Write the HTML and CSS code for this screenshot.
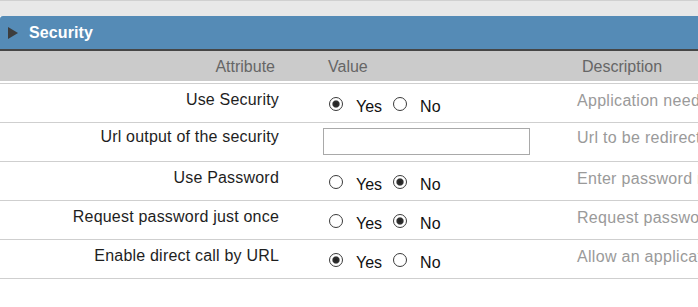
FILE: index.html
```html
<!DOCTYPE html>
<html>
<head>
<meta charset="utf-8">
<title>Security</title>
<link rel="stylesheet" href="styles.css">
</head>
<body>
<div class="topbar"></div>
<div class="section">
  <div class="section-head"><span class="tri"></span><span class="title">Security</span></div>
  <div class="colhead">
    <div class="c-attr">Attribute</div><div class="c-val">Value</div><div class="c-desc">Description</div>
  </div>
  <div class="rows">
    <div class="row">
      <div class="attr">Use Security</div>
      <div class="val"><label class="opt"><input type="radio" name="r1" checked>Yes</label><label class="opt"><input type="radio" name="r1">No</label></div>
      <div class="desc">Application needs security to be accessed</div>
    </div>
    <div class="row row-input">
      <div class="attr">Url output of the security</div>
      <div class="val"><input class="text" type="text"></div>
      <div class="desc">Url to be redirected when access is denied</div>
    </div>
    <div class="row">
      <div class="attr">Use Password</div>
      <div class="val"><label class="opt"><input type="radio" name="r3">Yes</label><label class="opt"><input type="radio" name="r3" checked>No</label></div>
      <div class="desc">Enter password required by the application</div>
    </div>
    <div class="row">
      <div class="attr">Request password just once</div>
      <div class="val"><label class="opt"><input type="radio" name="r4">Yes</label><label class="opt"><input type="radio" name="r4" checked>No</label></div>
      <div class="desc">Request password just once per session</div>
    </div>
    <div class="row last">
      <div class="attr">Enable direct call by URL</div>
      <div class="val"><label class="opt"><input type="radio" name="r5" checked>Yes</label><label class="opt"><input type="radio" name="r5">No</label></div>
      <div class="desc">Allow an application to be called directly by URL</div>
    </div>
  </div>
</div>
</body>
</html>
```
FILE: styles.css
```css
html, body {
  margin: 0;
  padding: 0;
  overflow: hidden;
  background: #fff;
}
body {
  font-family: "Liberation Sans", Arial, sans-serif;
  font-size: 16px;
  color: #1e1e1e;
}
.topbar {
  height: 15px;
  border-top: 1px solid #d0d0d0;
  background: #e8e8e8;
}
.section-head {
  height: 33px;
  background: #558bb6;
  border-bottom: 2px solid #464646;
  border-radius: 3px 0 0 0;
  display: flex;
  align-items: center;
}
.tri {
  width: 0;
  height: 0;
  border-left: 10px solid #3d3d3d;
  border-top: 6px solid transparent;
  border-bottom: 6px solid transparent;
  margin-left: 8px;
  margin-right: 11px;
}
.title {
  color: #fff;
  font-weight: bold;
  font-size: 16px;
  padding-top: 1px;
  letter-spacing: 0.1px;
}
.colhead {
  display: grid;
  grid-template-columns: 295px 270px 1fr;
  height: 30px;
  line-height: 31px;
  background: #cbcbcb;
  color: #666;
  border-bottom: 2px solid #fff;
  overflow: hidden;
}
.c-attr {
  text-align: right;
  padding-right: 20px;
}
.c-val {
  padding-left: 33px;
}
.c-desc {
  padding-left: 17px;
  white-space: nowrap;
}
.row {
  display: grid;
  grid-template-columns: 295px 270px 1fr;
  height: 38px;
  border-top: 1px solid #cfcfcf;
  line-height: 18px;
}
.row.last {
  border-bottom: 1px solid #cfcfcf;
}
.attr {
  text-align: right;
  padding-right: 16px;
  padding-top: 7px;
  white-space: nowrap;
  letter-spacing: 0.2px;
}
.val {
  padding-left: 34px;
  padding-top: 13px;
  white-space: nowrap;
  color: #111;
}
.desc {
  padding-left: 12px;
  padding-top: 8px;
  color: #9a9a9a;
  white-space: nowrap;
  overflow: hidden;
  letter-spacing: 0.3px;
}
.row-input .attr {
  padding-top: 5px;
}
.row-input .desc {
  padding-top: 6px;
}
.row-input .val {
  padding-top: 5px;
  padding-left: 28px;
}
.opt + .opt {
  margin-left: 11px;
}
.opt input {
  -webkit-appearance: none;
  appearance: none;
  width: 14px;
  height: 14px;
  margin: 0 13px 0 0;
  border: 1px solid #3a3a3a;
  border-radius: 50%;
  background: #fff;
  vertical-align: 1px;
  box-sizing: border-box;
}
.opt input:checked {
  background: radial-gradient(circle, #1f1f1f 0, #303030 3px, #fff 4.2px);
}
.text {
  box-sizing: border-box;
  width: 207px;
  height: 27px;
  border: 1px solid #a9a9a9;
  margin: 0;
  padding: 2px 4px;
  font: inherit;
  background: #fff;
}
```
